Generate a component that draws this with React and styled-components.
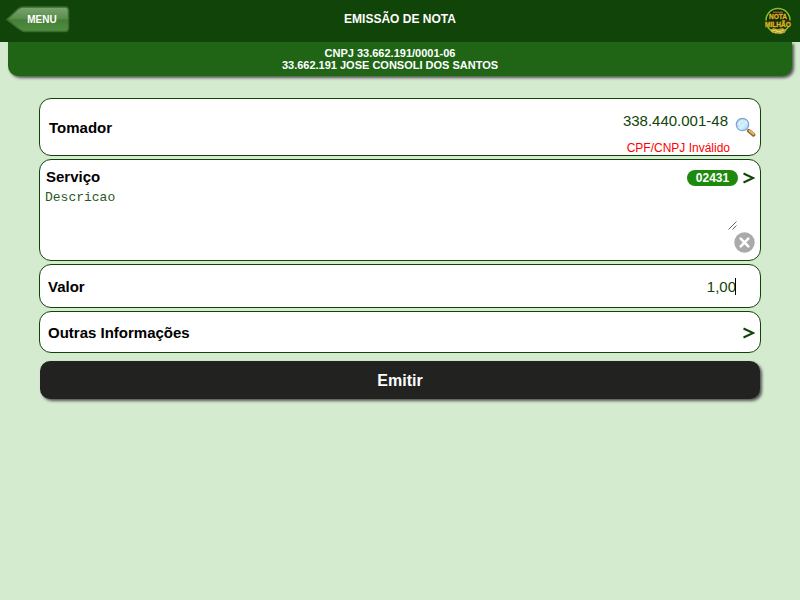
import React from "react";
import styled, { createGlobalStyle } from "styled-components";

const Global = createGlobalStyle`
  * { box-sizing: border-box; }
  body { margin: 0; background: #d5ebd0; font-family: "Liberation Sans", Arial, sans-serif; }
`;
const Page = styled.div`
  min-height: 100vh;
`;
const Header = styled.header`
  display: grid;
  grid-template-columns: 80px 1fr 80px;
  height: 42px;
  background: #114409;
  color: #fff;
`;
const MenuButton = styled.button`
  position: relative;
  width: 64px;
  height: 27px;
  margin: 6px 0 0 6px;
  padding: 0 0 0 8px;
  border: 0;
  background: none;
  color: #fff;
  font: bold 10px/27px "Liberation Sans", Arial, sans-serif;
`;
const MenuShape = styled.svg`
  position: absolute;
  inset: 0;
`;
const MenuLabel = styled.span`
  position: relative;
`;
const Title = styled.h1`
  margin: 0;
  text-align: center;
  font-size: 12px;
  line-height: 38px;
`;
const Logo = styled.svg`
  justify-self: end;
  margin: 6px 7px 0 0;
`;
const Company = styled.div`
  height: 34px;
  margin: 0 8px;
  padding: 5px 20px 0 0;
  border-radius: 0 0 10px 10px;
  background: #206515;
  box-shadow: 2px 2px 3px #555;
  color: #fff;
  text-align: center;
  font-weight: bold;
  font-size: 11px;
  line-height: 12px;
`;
const Form = styled.main`
  display: flex;
  flex-direction: column;
  gap: 3px;
  margin: 22px 39px 0;
`;
const Card = styled.section`
  display: flex;
  justify-content: space-between;
  align-items: ${(p) => p.$align || "center"};
  height: ${(p) => p.$height}px;
  padding: ${(p) => p.$padding};
  border: 1px solid #114409;
  border-radius: 12px;
  background: #fff;
`;
const Label = styled.label`
  font-weight: bold;
  font-size: 15px;
  line-height: 18px;
  color: #000;
`;
const Value = styled.span`
  font-size: 15px;
  line-height: 18px;
  color: #114409;
`;
const Lookup = styled.div`
  display: flex;
  align-self: flex-start;
`;
const LookupText = styled.div`
  display: flex;
  flex-direction: column;
  align-items: flex-end;
  padding-top: 11px;
`;
const DocValue = styled(Value)`
  margin-right: 2px;
`;
const ErrorText = styled.span`
  margin-top: 11px;
  color: #f00;
  font-size: 12px;
  line-height: 14px;
`;
const SearchIcon = styled.svg`
  margin: 16px 0 0 5px;
`;
const ServiceText = styled.div`
  display: flex;
  flex-direction: column;
`;
const Description = styled.span`
  margin: 4px 0 0 -1px;
  font: 13px/15px "Liberation Mono", "Courier New", monospace;
  color: #2a5823;
`;
const ServiceTools = styled.div`
  display: flex;
  flex-direction: column;
  align-items: flex-end;
`;
const CodeRow = styled.div`
  display: flex;
  align-items: center;
  gap: 5px;
  height: 18px;
  margin-top: 1px;
`;
const Badge = styled.span`
  width: 51px;
  height: 16px;
  border-radius: 8px;
  background: #1d8a0d;
  color: #fff;
  text-align: center;
  font-weight: bold;
  font-size: 12px;
  line-height: 16px;
`;
const Grip = styled.svg`
  margin: 34px 18px 0 0;
`;
const Clear = styled.svg`
  margin-top: 2px;
`;
const Caret = styled.span`
  display: inline-block;
  width: 1px;
  height: 17px;
  margin: 0 0 0 -1px;
  background: #000;
  vertical-align: -3px;
`;
const Submit = styled.button`
  height: 38px;
  margin: 5px 1px 0;
  padding: 1px 0 0;
  border: 0;
  border-radius: 10px;
  background: #222220;
  box-shadow: 2px 2px 3px #555;
  color: #fff;
  font: bold 16px/37px "Liberation Sans", Arial, sans-serif;
`;

const Chevron = () => (
  <svg width="12" height="12" viewBox="0 0 12 12">
    <path d="M0.5 1.5L10.2 6L0.5 10.5" fill="none" stroke="#114409" strokeWidth="2" />
  </svg>
);

export default function App() {
  return (
    <Page>
      <Global />
      <Header>
        <MenuButton>
          <MenuShape width="64" height="27" viewBox="0 0 64 27">
            <defs>
              <linearGradient id="menu" x1="0" y1="0" x2="0" y2="1">
                <stop offset="0" stopColor="#7ba570" />
                <stop offset=".49" stopColor="#598d4b" />
                <stop offset=".52" stopColor="#447f35" />
                <stop offset="1" stopColor="#508f40" />
              </linearGradient>
            </defs>
            <path d="M1 13.500L12 3Q14.500 1 17 1H59Q62.500 1 62.500 4.500V22Q62.500 25.500 59 25.500H20Q16 25.500 13 23Z" fill="url(#menu)" stroke="#3b6b32" strokeWidth="1.500" />
          </MenuShape>
          <MenuLabel>MENU</MenuLabel>
        </MenuButton>
        <Title>EMISSÃO DE NOTA</Title>
        <Logo width="30" height="30" viewBox="0 0 30 30">
          <circle cx="15" cy="14.500" r="12" fill="#12280a" stroke="#79c52f" strokeWidth="1.500" />
          <path d="M10 6.300h10" stroke="#a75038" strokeWidth="1.500" />
          <path d="M2 14.500h26v6.500H2z" fill="#24350a" />
          <g fontFamily="Liberation Sans, Arial, sans-serif" fontWeight="bold" fill="#dfb51f" stroke="#dfb51f" strokeWidth=".3" textAnchor="middle">
            <text x="15" y="13.300" fontSize="7" textLength="18" lengthAdjust="spacingAndGlyphs">NOTA</text>
            <text x="15" y="20.800" fontSize="7" textLength="26" lengthAdjust="spacingAndGlyphs">MILHÃO</text>
          </g>
          <path d="M6.500 24l4-2 4 1 5-1 4 2-2 3-5 1-7-1z" fill="#b6a52c" />
          <path d="M8 25l5-1 2 2 6-2M12 27l3-2 4 2" fill="none" stroke="#e5d66a" />
        </Logo>
      </Header>
      <Company>
        <div>CNPJ 33.662.191/0001-06</div>
        <div>33.662.191 JOSE CONSOLI DOS SANTOS</div>
      </Company>
      <Form>
        <Card $height={58} $padding="2px 4px 0 9px">
          <Label>Tomador</Label>
          <Lookup>
            <LookupText>
              <DocValue>338.440.001-48</DocValue>
              <ErrorText>CPF/CNPJ Inválido</ErrorText>
            </LookupText>
            <SearchIcon width="21" height="21" viewBox="0 0 21 21">
              <defs>
                <linearGradient id="lens" x1="0" y1="0" x2="1" y2="1">
                  <stop offset="0" stopColor="#8fcaf2" />
                  <stop offset=".55" stopColor="#d7f2ff" />
                  <stop offset="1" stopColor="#87cbed" />
                </linearGradient>
              </defs>
              <path d="M13.800 13.800L18.500 17.800" stroke="#906a3c" strokeWidth="3.800" strokeLinecap="round" />
              <path d="M14.500 13.800L18.500 17" stroke="#f0b95c" strokeWidth="2" strokeLinecap="round" />
              <circle cx="7.500" cy="7.500" r="6.200" fill="url(#lens)" stroke="#83a4cf" strokeWidth="1.300" />
              <path d="M3.800 8Q4 4 8 3.700" fill="none" stroke="#eefaff" strokeWidth="1.200" />
            </SearchIcon>
          </Lookup>
        </Card>
        <Card $height={102} $align="flex-start" $padding="8px 5px 0 6px">
          <ServiceText>
            <Label>Serviço</Label>
            <Description>Descricao</Description>
          </ServiceText>
          <ServiceTools>
            <CodeRow>
              <Badge>02431</Badge>
              <Chevron />
            </CodeRow>
            <Grip width="9" height="9" viewBox="0 0 9 9">
              <path d="M.5 8.500L8.500 .5M4.500 8.500L8.500 4.500" stroke="#555" strokeWidth=".9" />
            </Grip>
            <Clear width="21" height="21" viewBox="0 0 21 21">
              <circle cx="10.500" cy="10.500" r="10.200" fill="#aaa" />
              <path d="M6.700 6.700l7.600 7.600m0-7.600l-7.600 7.600" stroke="#fff" strokeWidth="2.600" strokeLinecap="round" />
            </Clear>
          </ServiceTools>
        </Card>
        <Card $height={44} $padding="2px 24px 0 8px">
          <Label>Valor</Label>
          <Value>1,00<Caret /></Value>
        </Card>
        <Card $height={42} $padding="2px 5px 0 8px">
          <Label>Outras Informações</Label>
          <Chevron />
        </Card>
        <Submit>Emitir</Submit>
      </Form>
    </Page>
  );
}
